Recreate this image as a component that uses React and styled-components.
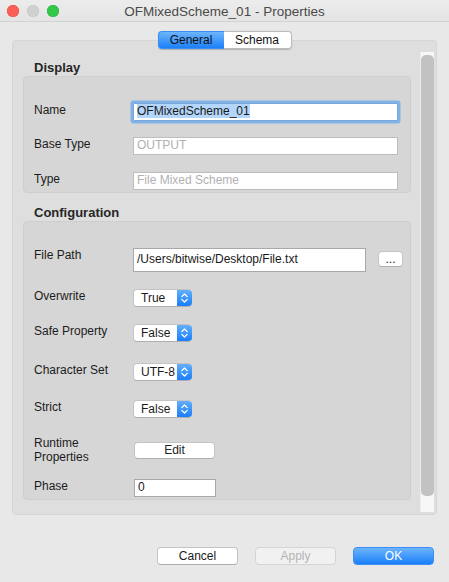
import React from "react";
import styled, { createGlobalStyle } from "styled-components";

const GlobalStyle = createGlobalStyle`
  html, body {
    margin: 0;
    padding: 0;
    background: #e8e8e8;
    font-family: "Liberation Sans", Arial, sans-serif;
    color: #1a1a1a;
  }
`;

//Window
const Window = styled.div`
  width: 449px;
  height: 582px;
  background: #e8e8e8;
  display: flex;
  flex-direction: column;
  overflow: hidden;
`;

//Title bar
const TitleBar = styled.div`
  height: 21px;
  border-bottom: 1px solid #d2d2d2;
  display: grid;
  grid-template-columns: 1fr auto 1fr;
  align-items: center;
  background: linear-gradient(#ececec, #e4e4e4);
`;

const Lights = styled.div`
  display: flex;
  gap: 8px;
  padding-left: 7px;
`;

const Light = styled.span`
  width: 12px;
  height: 12px;
  border-radius: 50%;
  background: ${({ $color }) => $color};
  box-shadow: inset 0 0 0 0.5px ${({ $edge }) => $edge};
`;

const Title = styled.div`
  font-size: 13.5px;
  color: #4a4a4a;
  padding-top: 1px;
`;

//Body
const Body = styled.div`
  padding: 9px 12px 0;
  display: flex;
  flex-direction: column;
`;

const Tabs = styled.div`
  align-self: center;
  display: flex;
  height: 18px;
  margin-bottom: -9px;
  position: relative;
  z-index: 1;
  border-radius: 4px;
  box-shadow: 0 0.5px 1px rgba(0, 0, 0, 0.2);
`;

const Tab = styled.div`
  width: ${({ $w }) => $w}px;
  box-sizing: border-box;
  font-size: 12px;
  line-height: 16px;
  text-align: center;
  color: #111;
  background: ${({ $active }) =>
    $active ? "linear-gradient(#6db5fb, #1b80fa)" : "#fff"};
  border: 1px solid ${({ $active }) => ($active ? "#3c8ef5" : "#bcbcbc")};
  border-radius: ${({ $first }) => ($first ? "4px 0 0 4px" : "0 4px 4px 0")};
  ${({ $first }) => ($first ? "border-right: none;" : "border-left: none;")}
`;

//Tab panel
const Panel = styled.div`
  height: 475px;
  box-sizing: border-box;
  background: #dedede;
  border: 1px solid #d6d6d6;
  border-radius: 4px;
  display: flex;
  gap: 9px;
  padding: 0 2px 0 10px;
`;

const Content = styled.div`
  width: 389px;
  display: flex;
  flex-direction: column;
`;

const Heading = styled.div`
  font-size: 13px;
  font-weight: bold;
  line-height: 16px;
  color: #262626;
  padding: ${({ $pt }) => $pt}px 0 0 11px;
  height: ${({ $h }) => $h}px;
  box-sizing: border-box;
`;

const Group = styled.div`
  background: #d6d6d6;
  border: 1px solid #cecece;
  border-radius: 4px;
  padding: 0 0 2px 10px;
  display: flex;
  flex-direction: column;
`;

const Row = styled.div`
  display: grid;
  grid-template-columns: 99px auto;
  align-items: ${({ $align }) => $align || "start"};
  margin-top: ${({ $mt }) => $mt}px;
`;

const Label = styled.div`
  font-size: 12px;
  line-height: 14px;
  color: #1c1c1c;
`;

const Controls = styled.div`
  display: flex;
  align-items: flex-start;
  gap: 12px;
`;

const Input = styled.div`
  width: ${({ $w }) => $w}px;
  height: ${({ $h }) => $h || 18}px;
  box-sizing: border-box;
  background: #fff;
  border: 1px solid ${({ $dark }) => ($dark ? "#a9a9a9" : "#bdbdbd")};
  font-size: 12px;
  line-height: ${({ $h }) => ($h || 18) - 3}px;
  padding: 0 3px;
  color: ${({ $muted }) => ($muted ? "#b1b1b1" : "#1a1a1a")};
  margin-left: ${({ $ml }) => $ml || 0}px;
  white-space: nowrap;
  ${({ $focus }) =>
    $focus &&
    `border-color: #7aa9d9;
     box-shadow: 0 0 0 2.5px #80b3ea;
     border-radius: 1px;`}
`;

const Selected = styled.span`
  background: #b4d6fb;
`;

const SmallButton = styled.div`
  width: ${({ $w }) => $w}px;
  height: ${({ $h }) => $h || 17}px;
  box-sizing: border-box;
  background: #fff;
  border: 1px solid #c4c4c4;
  border-bottom-color: #b0b0b0;
  border-radius: 4px;
  font-size: 12px;
  line-height: ${({ $h }) => ($h || 17) - 2}px;
  text-align: center;
  margin-top: ${({ $mt }) => $mt || 0}px;
  margin-left: ${({ $ml }) => $ml || 0}px;
  color: #222;
`;

//Popup select
const Select = styled.div`
  width: 59px;
  height: 18px;
  box-sizing: border-box;
  display: flex;
  border-radius: 4px;
  border: 1px solid #c4c4c4;
  border-right: none;
  border-bottom-color: #afafaf;
  overflow: hidden;
  background: #fff;
`;

const SelectValue = styled.div`
  flex: 1;
  font-size: 12px;
  line-height: 16px;
  padding-left: 7px;
  color: #1a1a1a;
`;

const SelectArrows = styled.div`
  width: 15px;
  background: linear-gradient(#62aefb, #1b7ef9);
  display: flex;
  align-items: center;
  justify-content: center;
`;

const ScrollTrack = styled.div`
  width: 14px;
  margin: 11px 0 2px;
  background: #f7f7f7;
  border-left: 1px solid #ececec;
  box-sizing: border-box;
  display: flex;
  justify-content: center;
`;

const ScrollThumb = styled.div`
  width: 9px;
  margin: 3px 0 16px;
  border-radius: 5px;
  background: #c2c2c2;
  flex: 1;
`;

//Footer
const Footer = styled.div`
  display: flex;
  justify-content: flex-end;
  gap: 17px;
  padding: 32px 15px 0 0;
`;

const Button = styled.div`
  width: 81px;
  height: 18px;
  box-sizing: border-box;
  border-radius: 4px;
  font-size: 12px;
  line-height: 16px;
  text-align: center;
  ${({ $variant }) =>
    $variant === "primary"
      ? `background: linear-gradient(#6cb4fb, #1a7ff9);
         border: 1px solid #3a8ef4;
         color: #fff;`
      : $variant === "disabled"
      ? `background: #f1f1f1;
         border: 1px solid #d4d4d4;
         color: #b4b4b4;`
      : `background: #fff;
         border: 1px solid #c4c4c4;
         border-bottom-color: #adadad;
         color: #1a1a1a;`}
`;

function Arrows() {
  return (
    <svg width="9" height="12" viewBox="0 0 9 12">
      <path
        d="M1.8 4.6 L4.5 2 L7.2 4.6 M1.8 7.4 L4.5 10 L7.2 7.4"
        fill="none"
        stroke="#fff"
        strokeWidth="1.3"
        strokeLinecap="round"
        strokeLinejoin="round"
      />
    </svg>
  );
}

function PopUp({ value }) {
  return (
    <Select>
      <SelectValue>{value}</SelectValue>
      <SelectArrows>
        <Arrows />
      </SelectArrows>
    </Select>
  );
}

export default function App() {
  return (
    <>
      <GlobalStyle />
      <Window>
        <TitleBar>
          <Lights>
            <Light $color="#fc5f57" $edge="#df4744" />
            <Light $color="#d0d0d0" $edge="#c3c3c3" />
            <Light $color="#34c84a" $edge="#2aac3a" />
          </Lights>
          <Title>OFMixedScheme_01 - Properties</Title>
          <div />
        </TitleBar>

        <Body>
          <Tabs>
            <Tab $w={66} $first $active>
              General
            </Tab>
            <Tab $w={68}>Schema</Tab>
          </Tabs>

          <Panel>
            <Content>
              <Heading $pt={19} $h={35}>
                Display
              </Heading>
              <Group>
                <Row $mt={26}>
                  <Label>Name</Label>
                  <Input $w={265} $focus>
                    <Selected>OFMixedScheme_01</Selected>
                  </Input>
                </Row>
                <Row $mt={16}>
                  <Label>Base Type</Label>
                  <Input $w={265} $muted>
                    OUTPUT
                  </Input>
                </Row>
                <Row $mt={17}>
                  <Label>Type</Label>
                  <Input $w={265} $muted>
                    File Mixed Scheme
                  </Input>
                </Row>
              </Group>

              <Heading $pt={12} $h={28}>
                Configuration
              </Heading>
              <Group>
                <Row $mt={26}>
                  <Label>File Path</Label>
                  <Controls>
                    <Input $w={233} $h={24} $dark>
                      /Users/bitwise/Desktop/File.txt
                    </Input>
                    <SmallButton $w={25} $h={16} $mt={3}>
                      ...
                    </SmallButton>
                  </Controls>
                </Row>
                <Row $mt={17}>
                  <Label>Overwrite</Label>
                  <PopUp value="True" />
                </Row>
                <Row $mt={17}>
                  <Label>Safe Property</Label>
                  <PopUp value="False" />
                </Row>
                <Row $mt={21}>
                  <Label>Character Set</Label>
                  <PopUp value="UTF-8" />
                </Row>
                <Row $mt={19}>
                  <Label>Strict</Label>
                  <PopUp value="False" />
                </Row>
                <Row $mt={18} $align="center">
                  <Label>
                    Runtime
                    <br />
                    Properties
                  </Label>
                  <SmallButton $w={81} $ml={1}>
                    Edit
                  </SmallButton>
                </Row>
                <Row $mt={15}>
                  <Label>Phase</Label>
                  <Input $w={82} $ml={1} $dark>
                    0
                  </Input>
                </Row>
              </Group>
            </Content>
            <ScrollTrack>
              <ScrollThumb />
            </ScrollTrack>
          </Panel>
        </Body>

        <Footer>
          <Button>Cancel</Button>
          <Button $variant="disabled">Apply</Button>
          <Button $variant="primary">OK</Button>
        </Footer>
      </Window>
    </>
  );
}
